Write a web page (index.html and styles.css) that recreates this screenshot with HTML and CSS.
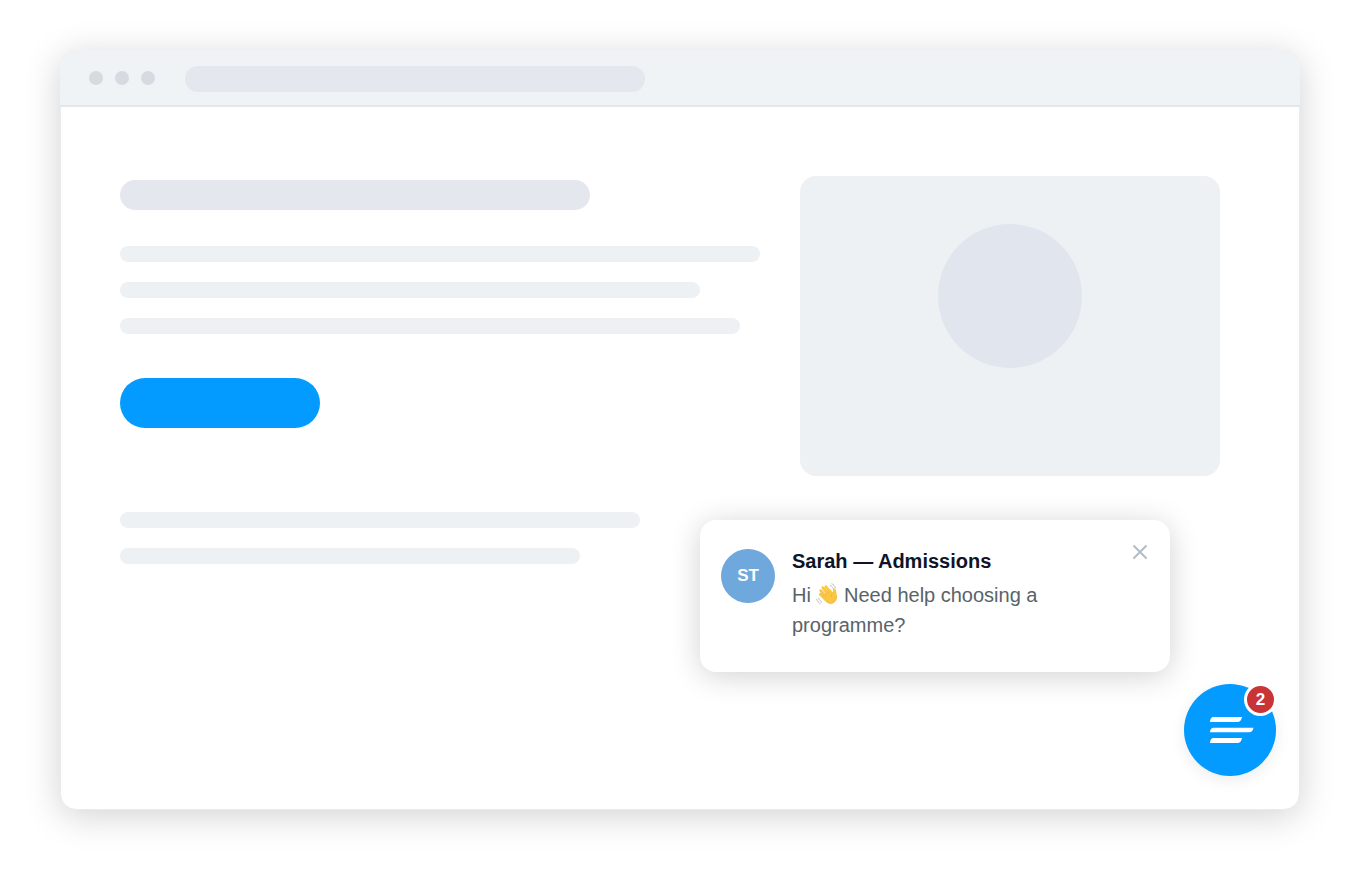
FILE: index.html
```html
<!DOCTYPE html>
<html lang="en">
<head>
    <meta charset="UTF-8">
    <meta name="viewport" content="width=device-width, initial-scale=1.0">
    <title>Chat widget preview</title>
    <link rel="stylesheet" href="styles.css">
</head>
<body>
    <div class="browser">
        <div class="toolbar">
            <div class="dots">
                <span class="dot"></span>
                <span class="dot"></span>
                <span class="dot"></span>
            </div>
            <div class="address-bar"></div>
        </div>

        <main class="page">
            <section class="hero">
                <div class="copy">
                    <div class="title-line"></div>
                    <div class="lines">
                        <div class="line line-full"></div>
                        <div class="line line-short"></div>
                        <div class="line line-long"></div>
                    </div>
                    <button class="cta" type="button" aria-label="Apply"></button>
                </div>
                <div class="picture">
                    <div class="picture-circle"></div>
                </div>
            </section>
            <section class="lines more">
                <div class="line line-mid"></div>
                <div class="line line-small"></div>
            </section>
        </main>

        <div class="message">
            <div class="avatar">ST</div>
            <div class="message-text">
                <h2>Sarah — Admissions</h2>
                <p>Hi <svg class="wave" viewBox="0 0 24 24" role="img" aria-label="Waving hand">
                    <g fill="none" stroke="#b4b8ba" stroke-width="1" stroke-linecap="round">
                        <path d="M15.600 2.600c1.600.7 2.700 1.900 3.200 3.500M17.300.8c1.900.9 3.200 2.500 3.800 4.500"/>
                        <path d="M3 16.800c.6 1.800 1.700 3.100 3.300 3.900M.8 17.800c.7 2.200 2 3.800 3.900 4.800"/>
                    </g>
                    <g fill="none" stroke="#fcc740" stroke-width="2.800" stroke-linecap="round">
                        <path d="M10.800 3.800l6 8"/>
                        <path d="M7.300 4.900l7 9"/>
                        <path d="M4.900 8.200l7 8.500"/>
                        <path d="M4.600 12.300l6 6.200"/>
                    </g>
                    <path fill="#fcc740" d="M7 13.500l8.500-7 2.900 4.200c.2-2.200-.3-4 1-4.600 1.800-.6 2.600 1.500 2.900 4.300.4 3.200 1 6.200-.7 8.900-2 3-5.600 4-8.500 2.600-1.700-.8-3-2.100-4.200-3.500z"/>
                    <g fill="none" stroke="#eba437" stroke-width=".6" stroke-linecap="round">
                        <path d="M9.200 5l5.100 6.300M6.500 7.400l5.400 6.500M5.400 11.100l4.500 4.700"/>
                        <path d="M18.400 10.700c-1.900 1.300-2.400 2.900-1.700 4.800"/>
                        <path d="M11 20.200c2.900 2.700 7.300 2.600 9.800-.2 1.500-1.700 1.800-3.600 1.600-5.700"/>
                    </g>
                </svg> Need help choosing a programme?</p>
            </div>
            <button class="close" type="button" aria-label="Close">
                <svg viewBox="0 0 18 18" aria-hidden="true">
                    <path d="M3 3l12 12M15 3L3 15" fill="none" stroke="#b3bdc5" stroke-width="2" stroke-linecap="round"/>
                </svg>
            </button>
        </div>

        <button class="launcher" type="button" aria-label="Open chat, 2 unread messages">
            <svg viewBox="0 0 44 28" aria-hidden="true">
                <g fill="#fff">
                    <path d="M3.500 1h28.500q-.9 5-4.500 5h-27.500q.3-5 3.500-5z"/>
                    <path d="M3.500 11.700h40q-.9 4.600-4.500 4.600h-39q.3-4.600 3.500-4.600z"/>
                    <path d="M3.500 22h28.500q-.9 5-4.500 5h-27.500q.3-5 3.500-5z"/>
                </g>
            </svg>
            <span class="badge">2</span>
        </button>
    </div>
</body>
</html>
```

FILE: styles.css
```css
* {
    box-sizing: border-box;
}
body {
    margin: 0;
    padding: 50px 60px 84px;
    min-height: 100vh;
    display: flex;
    background: #fff;
    font-family: "Liberation Sans", Arial, sans-serif;
}
button {
    border: none;
    padding: 0;
    cursor: pointer;
    font-family: inherit;
}
.browser {
    position: relative;
    flex: 1;
    border: 1px solid #e8ebed;
    border-radius: 16px;
    background: #fff;
    box-shadow: 0 6px 36px rgba(0, 0, 0, 0.18);
}
.toolbar {
    display: flex;
    align-items: flex-start;
    gap: 30px;
    height: 57px;
    margin: -1px -1px 0;
    padding: 16px 29px 0;
    background: #eff3f6;
    border-bottom: 2px solid #e2e7ea;
    border-radius: 16px 16px 0 0;
}
.dots {
    display: flex;
    gap: 12px;
    padding-top: 5px;
}
.dot {
    width: 14px;
    height: 14px;
    border-radius: 50%;
    background: #d5dbe0;
}
.address-bar {
    width: 460px;
    height: 26px;
    border-radius: 13px;
    background: #e4e7ed;
}
.page {
    padding: 69px 79px 0 59px;
}
.hero {
    display: flex;
    justify-content: space-between;
    gap: 40px;
}
.copy {
    flex: 1;
    padding-top: 4px;
}
.title-line {
    width: 470px;
    max-width: 100%;
    height: 30px;
    margin-bottom: 36px;
    border-radius: 15px;
    background: #e4e7ee;
}
.lines {
    display: flex;
    flex-direction: column;
    gap: 20px;
}
.line {
    height: 16px;
    max-width: 100%;
    border-radius: 8px;
    background: #edf1f4;
}
.line-full {
    width: 640px;
}
.line-short {
    width: 580px;
}
.line-long {
    width: 620px;
}
.line-mid {
    width: 520px;
}
.line-small {
    width: 460px;
}
.cta {
    display: block;
    width: 200px;
    height: 50px;
    margin-top: 44px;
    border-radius: 25px;
    background: #039bff;
}
.picture {
    display: flex;
    justify-content: center;
    width: 420px;
    height: 300px;
    padding-top: 48px;
    border-radius: 16px;
    background: #edf1f4;
}
.picture-circle {
    width: 144px;
    height: 144px;
    border-radius: 50%;
    background: #e1e6ee;
}
.more {
    margin-top: 36px;
}

/* chat widget, floats over the page */
.message {
    position: absolute;
    right: 129px;
    bottom: 137px;
    display: flex;
    gap: 17px;
    width: 470px;
    height: 152px;
    padding: 26px 21px;
    border-radius: 16px;
    background: #fff;
    box-shadow: 0 4px 30px rgba(0, 0, 0, 0.18);
}
.avatar {
    display: flex;
    align-items: center;
    justify-content: center;
    flex: none;
    width: 54px;
    height: 54px;
    margin-top: 3px;
    border-radius: 50%;
    background: #6ea8dc;
    color: #fff;
    font-size: 17px;
    font-weight: bold;
}
.message-text {
    flex: 1;
}
.message h2 {
    margin: 0 0 4px;
    color: #0e1428;
    font-size: 20px;
    line-height: 30px;
}
.message p {
    margin: 0;
    color: #596369;
    font-size: 20px;
    line-height: 30px;
}
.wave {
    width: 22px;
    height: 22px;
    vertical-align: -3px;
}
.close {
    align-self: flex-start;
    width: 18px;
    height: 18px;
    margin-top: -3px;
    background: none;
}
.close svg {
    display: block;
    width: 18px;
    height: 18px;
}
.launcher {
    position: absolute;
    right: 23px;
    bottom: 33px;
    display: flex;
    align-items: center;
    justify-content: center;
    width: 92px;
    height: 92px;
    border-radius: 50%;
    background: #039bff;
    box-shadow: 0 4px 16px rgba(0, 0, 0, 0.08);
}
.launcher svg {
    width: 44px;
    height: 28px;
    margin-left: 4px;
}
.badge {
    position: absolute;
    top: -1px;
    right: -1px;
    display: flex;
    align-items: center;
    justify-content: center;
    width: 33px;
    height: 33px;
    border: 3px solid #fff;
    border-radius: 50%;
    background: #c93436;
    color: #fff;
    font-size: 17px;
    font-weight: bold;
}
```
